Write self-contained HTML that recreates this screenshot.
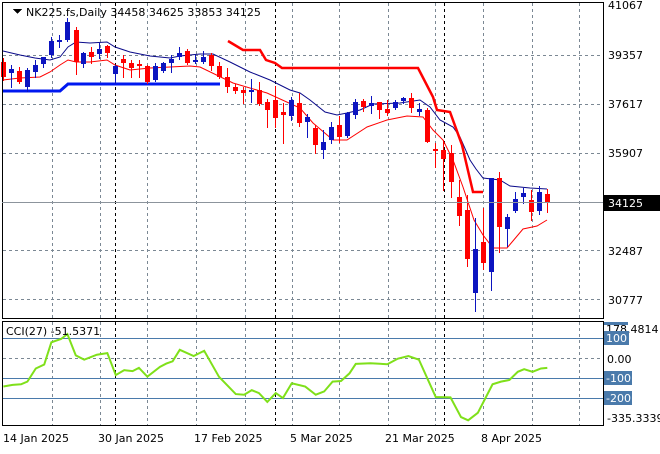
<!DOCTYPE html>
<html><head><meta charset="utf-8"><style>
body{margin:0;background:#fff;width:660px;height:450px;overflow:hidden;font-family:Tahoma,"DejaVu Sans","Liberation Sans",sans-serif}
svg text{font-family:"DejaVu Sans","Liberation Sans",sans-serif;font-size:11px}
</style></head><body>
<svg id="s" width="660" height="450" xmlns="http://www.w3.org/2000/svg" shape-rendering="crispEdges">
<rect width="660" height="450" fill="#fff"/>
<g id="grid" stroke="#7b8894" stroke-dasharray="3,3" stroke-width="1"></g>
<g id="c"></g>
<rect x="2.5" y="2.5" width="601" height="316" fill="none" stroke="#000"/>
<rect x="2.5" y="321.5" width="601" height="104" fill="none" stroke="#000"/>
<line x1="2" y1="202.5" x2="603" y2="202.5" stroke="#8c949c"/>
<path d="M13 9h9l-4.5 5z" fill="#000"/>
<text x="26" y="16" fill="#000">NK225.fs,Daily  34458 34625 33853 34125</text>
<text x="6" y="335" fill="#000">CCI(27) -51.5371</text>
<g fill="#000">
<text x="608" y="9">41067</text><text x="608" y="59">39357</text><text x="608" y="108">37617</text>
<text x="608" y="157">35907</text><text x="608" y="255">32487</text><text x="608" y="304">30777</text>
<text x="606" y="333">178.4814</text><text x="607" y="363">0.00</text><text x="607" y="422">-335.3339</text>
</g>
<rect x="604" y="195" width="56" height="16" fill="#000"/><text x="608" y="207" fill="#fff">34125</text>
<g fill="#4a7aab"><rect x="604" y="322" width="24" height="3"/><rect x="604" y="331" width="25" height="14"/><rect x="604" y="371" width="28" height="14"/><rect x="604" y="391" width="28" height="14"/></g>
<g fill="#fff"><text x="606" y="342">100</text><text x="606" y="382">-100</text><text x="606" y="402">-200</text></g>
<g fill="#000"><text x="3" y="442">14 Jan 2025</text><text x="98" y="442">30 Jan 2025</text><text x="194" y="442">17 Feb 2025</text><text x="290" y="442">5 Mar 2025</text><text x="385" y="442">21 Mar 2025</text><text x="481" y="442">8 Apr 2025</text></g>
</svg>
<script>
var NS="http://www.w3.org/2000/svg",g=document.getElementById('grid'),c=document.getElementById('c');
function el(p,t,a){var e=document.createElementNS(NS,t);for(var k in a)e.setAttribute(k,a[k]);p.appendChild(e);return e;}
[52,100,147,196,245,292,339,388,435,483,532,579].forEach(function(x){el(g,'line',{x1:x+.5,y1:3,x2:x+.5,y2:318});el(g,'line',{x1:x+.5,y1:322,x2:x+.5,y2:425});});
[115,275,444].forEach(function(x){el(g,'line',{x1:x+.5,y1:3,x2:x+.5,y2:318,stroke:'#000'});el(g,'line',{x1:x+.5,y1:322,x2:x+.5,y2:425,stroke:'#000'});});
[55,104,153,250,299].forEach(function(y){el(g,'line',{x1:3,y1:y+.5,x2:603,y2:y+.5});});
el(g,'line',{x1:3,y1:358.5,x2:603,y2:358.5});
[338,378,398].forEach(function(y){el(c,'line',{x1:3,y1:y+.5,x2:603,y2:y+.5,stroke:'#4a7aab'});});
var C=[[3,'r',62,77,58,80],[11,'b',69,73,65,87],[19,'r',71,82,67,83],[27,'b',70,87,68,91],[35,'b',65,72,60,77],[43,'b',57,64,57,67],[51,'b',41,55,37,57],[59,'b',40,42,35,47],[67,'b',22,40,18,41],[76,'r',30,62,27,74],[83,'b',53,64,52,67],[91,'r',52,57,47,63],[99,'b',49,54,43,58],[107,'r',46,53,45,57],[115,'b',66,74,65,83],[123,'r',59,63,55,77],[131,'r',63,68,60,77],[139,'r',64,66,60,77],[147,'r',66,82,65,83],[155,'b',66,80,63,81],[163,'b',63,71,62,72],[171,'b',59,63,55,72],[179,'b',53,57,47,59],[187,'r',51,63,49,64],[195,'b',60,62,55,63],[203,'b',57,62,51,63],[211,'r',55,66,53,70],
[219,'r',66,77,62,78],[227,'r',77,87,68,92],[235,'r',87,91,84,93],[243,'r',90,93,87,103],[251,'b',90,92,79,102],[259,'r',90,104,82,105],[267,'r',102,110,99,127],[275,'r',100,118,86,127],[283,'r',112,115,103,143],[291,'b',100,116,97,120],[299,'r',103,123,93,126],[307,'b',117,122,114,137],[315,'r',128,145,125,153],[323,'b',142,150,130,158],[331,'b',127,140,122,143],[339,'r',125,137,116,142],[347,'b',113,136,112,137],[355,'b',102,115,99,118],[363,'r',101,107,99,111],[371,'b',103,106,96,113],[379,'r',102,110,102,118],[387,'r',109,113,100,115],[395,'b',102,108,100,109],[403,'b',98,101,97,103],[411,'r',98,108,93,112],[419,'b',109,112,103,115],[427,'r',110,142,108,142],[435,'r',149,151,143,167],[443,'r',150,159,140,190],[451,'r',153,182,145,197],
[459,'r',197,216,180,225],[467,'r',210,259,195,266],[475,'b',249,293,218,311],[483,'r',242,263,208,269],[491,'b',178,272,178,290],[499,'r',178,227,172,252],[507,'b',217,229,214,246],[515,'b',199,211,192,212],[523,'b',193,197,188,203],[531,'r',200,212,190,220],[539,'b',192,211,186,214],[547,'r',194,203,189,212]];
function pl(pts,col,w){el(c,'polyline',{points:pts.map(function(p){return p.join(',')}).join(' '),fill:'none',stroke:col,'stroke-width':w,'shape-rendering':'auto'});}
pl([[3,51],[20,55],[35,58],[50,60],[60,57],[68,47],[76,42],[90,43],[107,42],[115,47],[130,52],[150,56],[170,58],[180,56],[200,54],[213,54],[230,62],[250,72],[270,80],[290,90],[300,93],[310,100],[325,112],[337,115],[347,113],[360,110],[373,104],[400,103],[420,100],[430,107],[440,120],[453,127],[460,137],[470,160],[476,169],[483,178],[500,180],[510,186],[530,188],[547,189]],'#0a0a8a',1);
pl([[3,80],[20,78],[40,77],[50,72],[60,65],[68,60],[76,62],[90,62],[107,60],[115,65],[130,70],[150,68],[170,67],[190,66],[200,67],[233,83],[267,93],[300,108],[313,123],[333,140],[347,140],[367,127],[387,120],[407,116],[423,117],[433,130],[443,140],[453,160],[463,187],[474,220],[483,235],[493,248],[507,248],[523,229],[537,226],[547,220]],'#f00',1);
pl([[228,41],[243,50],[260,50],[266,60],[275,63],[282,68],[418,68],[433,97],[437,110],[450,112],[462,145],[473,192],[483,192]],'#f00',2.5);
pl([[2,91],[60,91],[68,84],[220,84]],'#0018f0',3);
C.forEach(function(d){var col=d[1]=='b'?'#0a18b4':'#f00';if(d[1]=='b')col='#0c14c0';
el(c,'line',{x1:d[0]+.5,y1:d[4],x2:d[0]+.5,y2:d[5]+1,stroke:col});
el(c,'rect',{x:d[0]-2,y:d[2],width:5,height:Math.max(2,d[3]-d[2]),fill:col});});
var Z=[[8,215],[30,210],[50,208],[65,200],[85,160],[105,148],[122,80],[145,70],[160,55],[180,120],[200,133],[230,118],[255,113],[275,180],[295,165],[315,168],[330,158],[350,185],[380,155],[395,145],[410,138],[427,103],[460,122],[485,106],[520,185],[560,238],[580,240],[598,226],[615,235],[635,262],[655,235],[672,250],[693,205],[725,215],[750,240],[770,230],[790,200],[810,198],[830,175],[845,146],[880,144],[920,147],[945,130],[970,122],[995,133],[1035,247],[1070,248],[1095,308],[1112,318],[1135,295],[1170,208],[1190,200],[1210,195],[1230,170],[1245,162],[1265,170],[1285,160],[1300,158]];
pl(Z.map(function(p){return [p[0]*0.421,338+(p[1]-67)*0.328]}),'#7fe01a',2);
</script>
</body></html>
